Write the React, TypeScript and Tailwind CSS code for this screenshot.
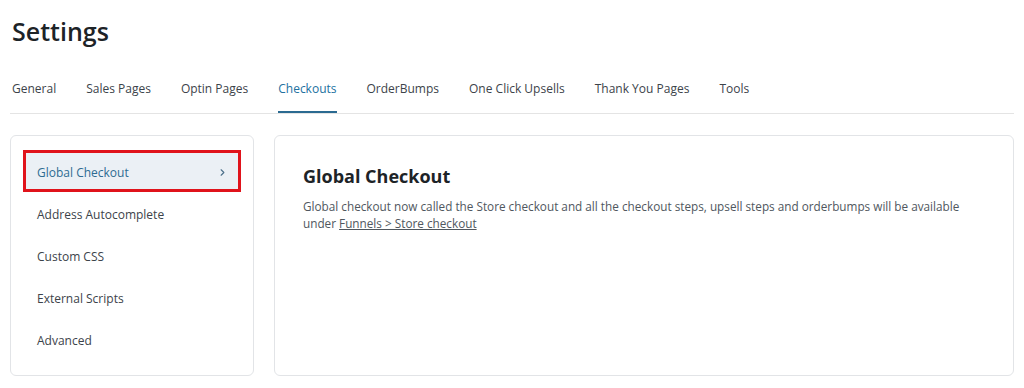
import { ChevronRight } from "lucide-react";

const tabs = [
  "General",
  "Sales Pages",
  "Optin Pages",
  "Checkouts",
  "OrderBumps",
  "One Click Upsells",
  "Thank You Pages",
  "Tools",
];

const menu = [
  "Global Checkout",
  "Address Autocomplete",
  "Custom CSS",
  "External Scripts",
  "Advanced",
];

export default function App() {
  return (
    <main
      className="h-[388px] w-[1024px] overflow-hidden bg-white px-[10px] text-[#3c434a]"
      style={{ fontFamily: '"Open Sans", "Noto Sans", sans-serif' }}
    >
      <h1 className="pl-[2px] pt-[14px] text-[25px] font-semibold leading-[34px] text-[#1d2327]">
        Settings
      </h1>

      <nav className="mt-[32px] flex gap-[30px] border-b border-[#e4e4e4] pl-[2px]">
        {tabs.map((tab) => {
          const active = tab === "Checkouts";
          return (
            <span
              key={tab}
              className={[
                "border-b-[2px] pb-[13px] text-[12px] leading-[18px]",
                active
                  ? "border-[#2a6a91] text-[#22719f]"
                  : "border-transparent text-[#3c434a]",
              ].join(" ")}
            >
              {tab}
            </span>
          );
        })}
      </nav>

      <div className="mt-[21px] flex gap-[20px]">
        <aside className="h-[241px] w-[244px] shrink-0 rounded-[6px] border border-[#e2e4e7] px-[12px] pb-[13px] pt-[14px]">
          {menu.map((item) => {
            const active = item === "Global Checkout";
            return (
              <div
                key={item}
                className={[
                  "flex h-[42px] items-center justify-between text-[12px]",
                  active
                    ? "border-[3px] border-[#e0131b] bg-[#ebf0f5] pl-[11px] pr-[10px] text-[#2e6c92]"
                    : "pl-[14px] pt-[3px] text-[#3c434a]",
                ].join(" ")}
              >
                <span className={active ? "pt-[3px]" : ""}>{item}</span>
                {active && (
                  <ChevronRight size={11} strokeWidth={2.4} className="mt-[2px] text-[#4b6f8a]" />
                )}
              </div>
            );
          })}
        </aside>

        <section className="h-[241px] flex-1 rounded-[6px] border border-[#e2e4e7] px-[28px] pt-[27px]">
          <h2 className="text-[18px] font-bold leading-[26px] text-[#1d2327]">
            Global Checkout
          </h2>
          <p className="mt-[9px] max-w-[670px] text-[11.75px] leading-[17px] text-[#50575e]">
            Global checkout now called the Store checkout and all the checkout
            steps, upsell steps and orderbumps will be available under{" "}
            <span className="underline">Funnels &gt; Store checkout</span>
          </p>
        </section>
      </div>
    </main>
  );
}
